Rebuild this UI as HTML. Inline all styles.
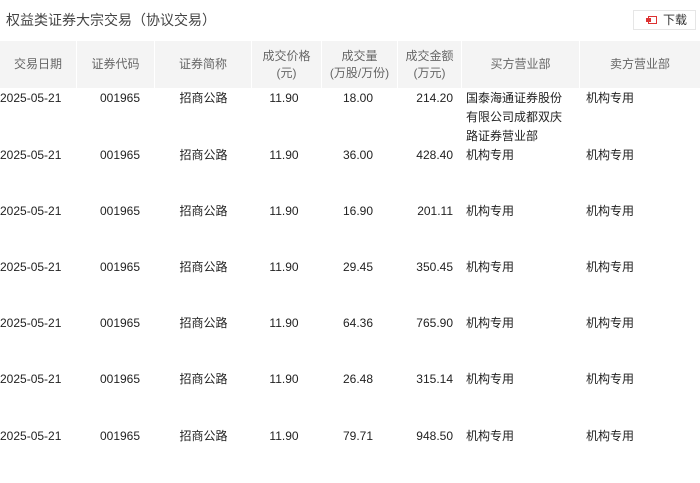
<!DOCTYPE html>
<html><head><meta charset="utf-8"><style>
body{margin:0;width:700px;height:483px;background:#fff;font-family:"Liberation Sans","Noto Sans CJK SC",sans-serif;color:#333;position:relative;overflow:hidden}
.t{position:absolute;left:6px;top:10px;font-size:14px;color:#444}
.dl{position:absolute;left:633px;top:10px;width:63px;height:20px;border:1px solid #e6e6e6;box-sizing:border-box;font-size:12px;color:#333;line-height:18px}
.dl i{position:absolute;left:14px;top:5px;width:9px;height:8px;border:1px solid #d33;box-sizing:border-box}
.dl i:before{content:"";position:absolute;left:-3px;top:1px;width:5px;height:4px;background:#d33}
.dl span{position:absolute;left:29px}
.hd{position:absolute;left:0;top:41px;width:700px;height:47px;background:#f4f4f4}
.hd div{position:absolute;top:0;height:47px;display:flex;align-items:center;justify-content:center;text-align:center;font-size:12px;color:#666;line-height:17px;border-right:1px solid #fff;box-sizing:border-box}
.c{position:absolute;font-size:12px;line-height:19px;color:#222}
</style></head><body>
<div class="t">权益类证券大宗交易（协议交易）</div>
<div class="dl"><i></i><span>下载</span></div>
<div class="hd">
<div style="left:0;width:77px">交易日期</div>
<div style="left:77px;width:78px">证券代码</div>
<div style="left:155px;width:97px">证券简称</div>
<div style="left:252px;width:70px">成交价格<br>(元)</div>
<div style="left:322px;width:76px">成交量<br>(万股/万份)</div>
<div style="left:398px;width:64px">成交金额<br>(万元)</div>
<div style="left:462px;width:118px">买方营业部</div>
<div style="left:580px;width:120px;border:0">卖方营业部</div>
</div>
<div class="c" style="top:89px;left:0">2025-05-21</div><div class="c" style="top:89px;left:77px;width:86px;text-align:center">001965</div><div class="c" style="top:89px;left:155px;width:97px;text-align:center">招商公路</div><div class="c" style="top:89px;left:252px;width:64px;text-align:center">11.90</div><div class="c" style="top:89px;left:322px;width:51px;text-align:right">18.00</div><div class="c" style="top:89px;left:398px;width:55px;text-align:right">214.20</div><div class="c" style="top:89px;left:466px;width:100px">国泰海通证券股份有限公司成都双庆路证券营业部</div><div class="c" style="top:89px;left:586px">机构专用</div>
<div class="c" style="top:146px;left:0">2025-05-21</div><div class="c" style="top:146px;left:77px;width:86px;text-align:center">001965</div><div class="c" style="top:146px;left:155px;width:97px;text-align:center">招商公路</div><div class="c" style="top:146px;left:252px;width:64px;text-align:center">11.90</div><div class="c" style="top:146px;left:322px;width:51px;text-align:right">36.00</div><div class="c" style="top:146px;left:398px;width:55px;text-align:right">428.40</div><div class="c" style="top:146px;left:466px">机构专用</div><div class="c" style="top:146px;left:586px">机构专用</div>
<div class="c" style="top:202px;left:0">2025-05-21</div><div class="c" style="top:202px;left:77px;width:86px;text-align:center">001965</div><div class="c" style="top:202px;left:155px;width:97px;text-align:center">招商公路</div><div class="c" style="top:202px;left:252px;width:64px;text-align:center">11.90</div><div class="c" style="top:202px;left:322px;width:51px;text-align:right">16.90</div><div class="c" style="top:202px;left:398px;width:55px;text-align:right">201.11</div><div class="c" style="top:202px;left:466px">机构专用</div><div class="c" style="top:202px;left:586px">机构专用</div>
<div class="c" style="top:258px;left:0">2025-05-21</div><div class="c" style="top:258px;left:77px;width:86px;text-align:center">001965</div><div class="c" style="top:258px;left:155px;width:97px;text-align:center">招商公路</div><div class="c" style="top:258px;left:252px;width:64px;text-align:center">11.90</div><div class="c" style="top:258px;left:322px;width:51px;text-align:right">29.45</div><div class="c" style="top:258px;left:398px;width:55px;text-align:right">350.45</div><div class="c" style="top:258px;left:466px">机构专用</div><div class="c" style="top:258px;left:586px">机构专用</div>
<div class="c" style="top:314px;left:0">2025-05-21</div><div class="c" style="top:314px;left:77px;width:86px;text-align:center">001965</div><div class="c" style="top:314px;left:155px;width:97px;text-align:center">招商公路</div><div class="c" style="top:314px;left:252px;width:64px;text-align:center">11.90</div><div class="c" style="top:314px;left:322px;width:51px;text-align:right">64.36</div><div class="c" style="top:314px;left:398px;width:55px;text-align:right">765.90</div><div class="c" style="top:314px;left:466px">机构专用</div><div class="c" style="top:314px;left:586px">机构专用</div>
<div class="c" style="top:370px;left:0">2025-05-21</div><div class="c" style="top:370px;left:77px;width:86px;text-align:center">001965</div><div class="c" style="top:370px;left:155px;width:97px;text-align:center">招商公路</div><div class="c" style="top:370px;left:252px;width:64px;text-align:center">11.90</div><div class="c" style="top:370px;left:322px;width:51px;text-align:right">26.48</div><div class="c" style="top:370px;left:398px;width:55px;text-align:right">315.14</div><div class="c" style="top:370px;left:466px">机构专用</div><div class="c" style="top:370px;left:586px">机构专用</div>
<div class="c" style="top:427px;left:0">2025-05-21</div><div class="c" style="top:427px;left:77px;width:86px;text-align:center">001965</div><div class="c" style="top:427px;left:155px;width:97px;text-align:center">招商公路</div><div class="c" style="top:427px;left:252px;width:64px;text-align:center">11.90</div><div class="c" style="top:427px;left:322px;width:51px;text-align:right">79.71</div><div class="c" style="top:427px;left:398px;width:55px;text-align:right">948.50</div><div class="c" style="top:427px;left:466px">机构专用</div><div class="c" style="top:427px;left:586px">机构专用</div>
</body></html>
